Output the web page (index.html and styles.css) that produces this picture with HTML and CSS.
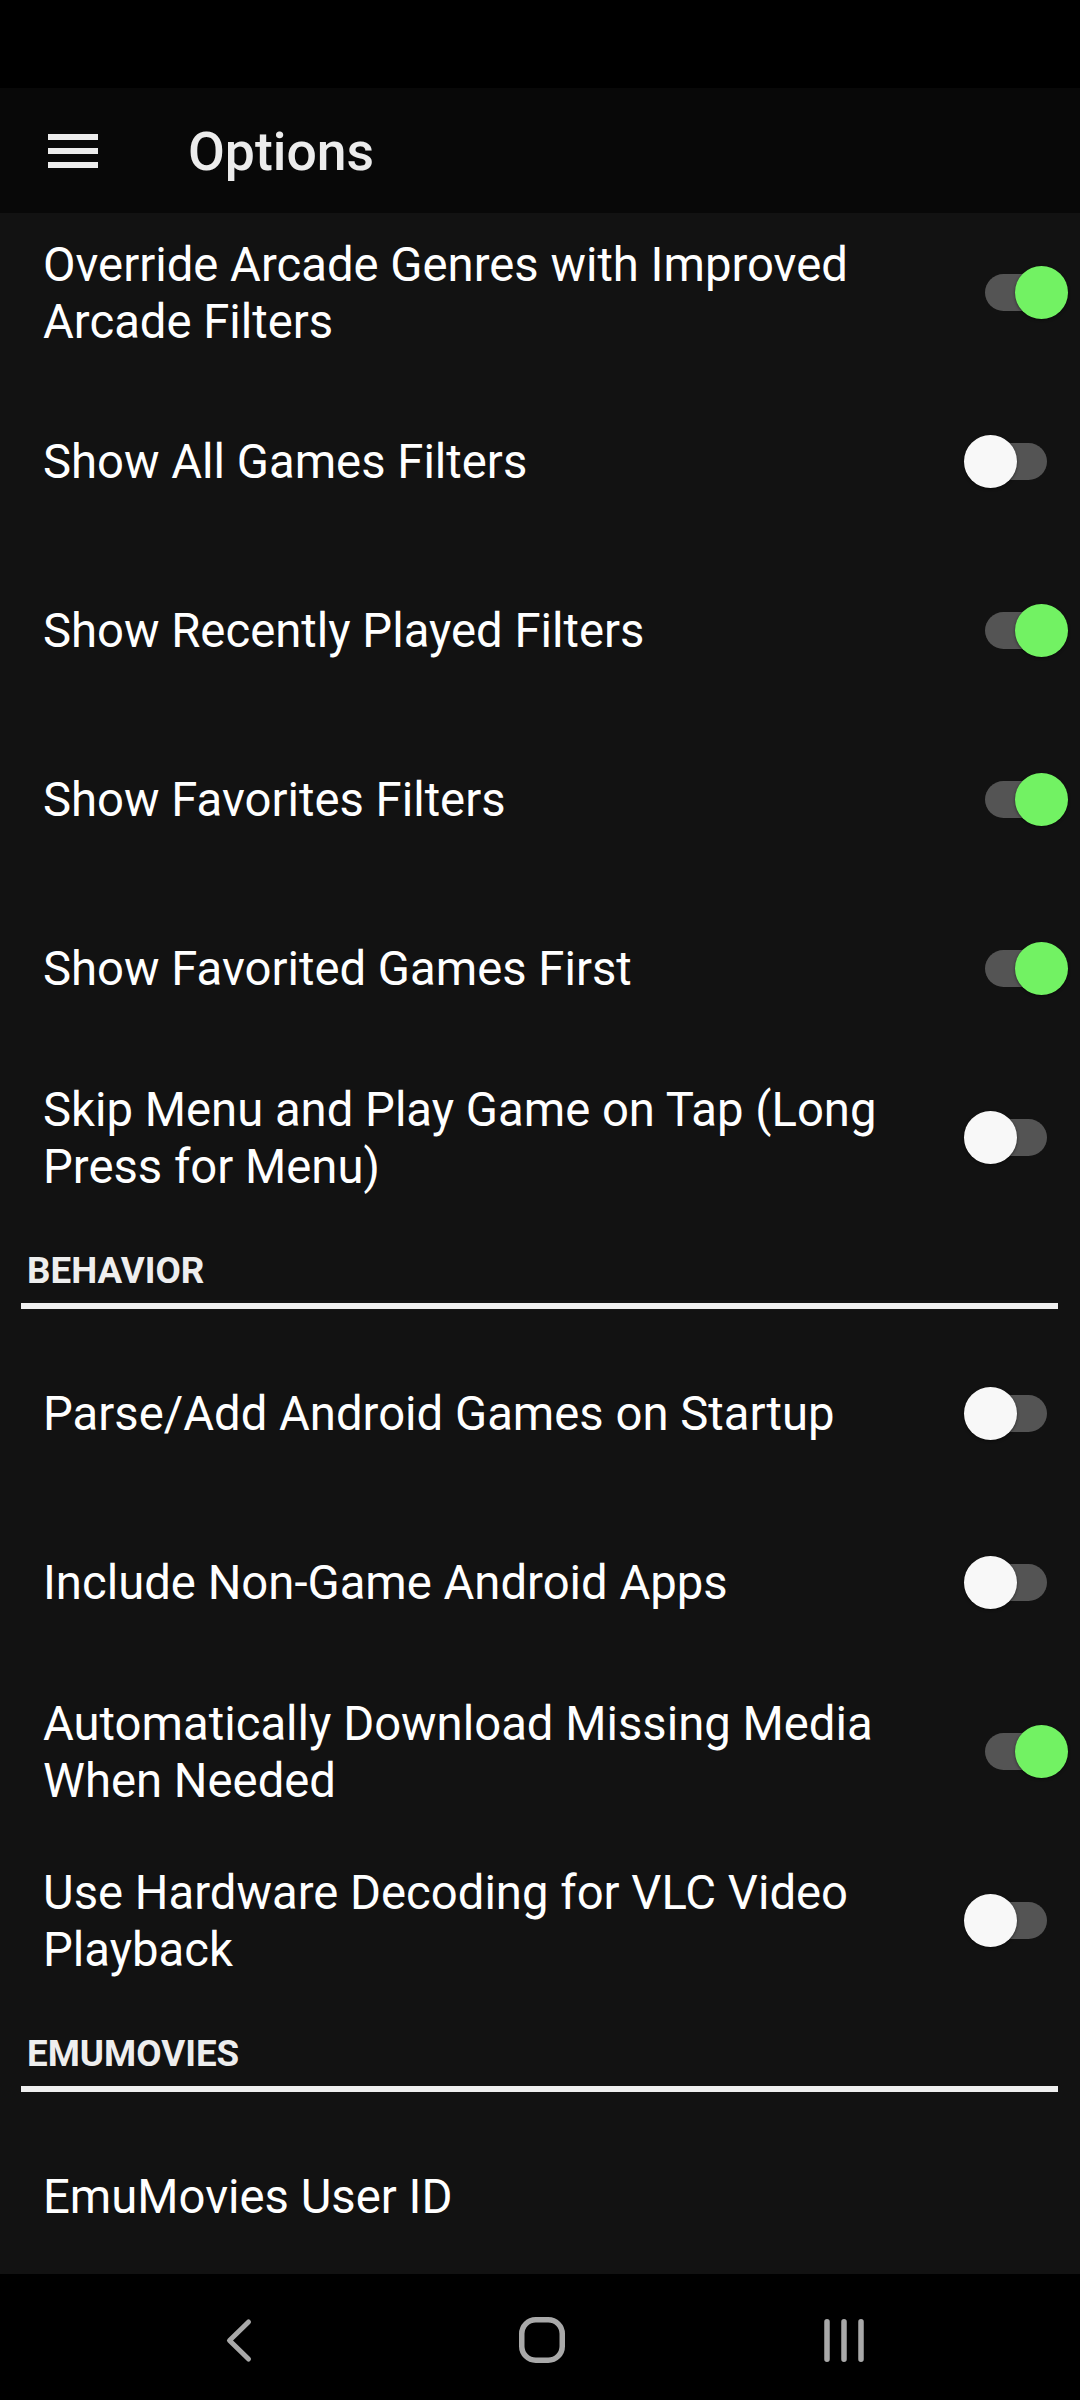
FILE: index.html
```html
<!DOCTYPE html>
<html>
<head>
<meta charset="utf-8">
<link rel="stylesheet" href="styles.css">
</head>
<body>
<div class="screen">
  <div class="status"></div>
  <div class="toolbar">
    <svg class="menu" width="50" height="34" viewBox="0 0 50 34">
      <rect x="0" y="0" width="50" height="6" fill="#ececec"/>
      <rect x="0" y="14" width="50" height="6" fill="#ececec"/>
      <rect x="0" y="28" width="50" height="6" fill="#ececec"/>
    </svg>
    <div class="title">Options</div>
  </div>
  <div class="content">
    <div class="list">
      <div class="row"><div class="label">Override Arcade Genres with Improved Arcade Filters</div><div class="switch on"><div class="track"></div><div class="thumb"></div></div></div>
      <div class="row"><div class="label">Show All Games Filters</div><div class="switch"><div class="track"></div><div class="thumb"></div></div></div>
      <div class="row"><div class="label">Show Recently Played Filters</div><div class="switch on"><div class="track"></div><div class="thumb"></div></div></div>
      <div class="row"><div class="label">Show Favorites Filters</div><div class="switch on"><div class="track"></div><div class="thumb"></div></div></div>
      <div class="row"><div class="label">Show Favorited Games First</div><div class="switch on"><div class="track"></div><div class="thumb"></div></div></div>
      <div class="row"><div class="label">Skip Menu and Play Game on Tap (Long Press for Menu)</div><div class="switch"><div class="track"></div><div class="thumb"></div></div></div>
      <div class="section">
        <div class="section-title">BEHAVIOR</div>
        <div class="divider"></div>
      </div>
      <div class="row"><div class="label">Parse/Add Android Games on Startup</div><div class="switch"><div class="track"></div><div class="thumb"></div></div></div>
      <div class="row"><div class="label">Include Non-Game Android Apps</div><div class="switch"><div class="track"></div><div class="thumb"></div></div></div>
      <div class="row"><div class="label">Automatically Download Missing Media When Needed</div><div class="switch on"><div class="track"></div><div class="thumb"></div></div></div>
      <div class="row"><div class="label">Use Hardware Decoding for VLC Video Playback</div><div class="switch"><div class="track"></div><div class="thumb"></div></div></div>
      <div class="section">
        <div class="section-title">EMUMOVIES</div>
        <div class="divider"></div>
      </div>
      <div class="row"><div class="label">EmuMovies User ID</div></div>
    </div>
  </div>
  <div class="navbar">
    <svg width="60" height="60" viewBox="0 0 60 60">
      <path d="M39.5 12 L20.5 30.5 L39.5 49" fill="none" stroke="#a9a9a9" stroke-width="5" stroke-linecap="round" stroke-linejoin="round"/>
    </svg>
    <svg width="60" height="60" viewBox="0 0 60 60">
      <rect x="9.75" y="9.75" width="40.5" height="40.5" rx="14" fill="none" stroke="#a9a9a9" stroke-width="5.5"/>
    </svg>
    <svg width="60" height="60" viewBox="0 0 60 60">
      <path d="M13 11.75 V49.25 M30 11.75 V49.25 M47 11.75 V49.25" fill="none" stroke="#a9a9a9" stroke-width="5.5" stroke-linecap="round"/>
    </svg>
  </div>
</div>
</body>
</html>
```
FILE: styles.css
```css
html, body {
  margin: 0;
  padding: 0;
  background: #000;
}
.screen {
  width: 1080px;
  height: 2400px;
  display: flex;
  flex-direction: column;
  font-family: Roboto, "Noto Sans", sans-serif;
  overflow: hidden;
}
.status {
  height: 88px;
  background: #000;
  flex: none;
}
.toolbar {
  height: 125px;
  flex: none;
  background: #080808;
  display: flex;
  align-items: center;
  position: relative;
  z-index: 2;
}
.menu {
  margin-left: 48px;
  display: block;
}
.title {
  margin-left: 90px;
  font-size: 53.5px;
  font-weight: 500;
  color: #ececec;
  line-height: 62px;
  padding-top: 2px;
}
.content {
  flex: 1;
  background: #121212;
  overflow: hidden;
}
.list {
  margin-top: -5.5px;
}
.row {
  height: 169px;
  display: flex;
  align-items: center;
  padding: 0 13px 0 43px;
}
.label {
  flex: 1;
  font-size: 47.25px;
  line-height: 56.5px;
  color: #fff;
  margin-right: 20px;
  padding-top: 3px;
}
.switch {
  position: relative;
  width: 103px;
  height: 53px;
  flex: none;
}
.track {
  position: absolute;
  left: 21px;
  top: 8px;
  width: 62px;
  height: 37px;
  border-radius: 18.5px;
  background: #545454;
}
.thumb {
  position: absolute;
  left: 0;
  top: 0;
  width: 53px;
  height: 53px;
  border-radius: 50%;
  background: #f8f8f8;
  box-shadow: 0 1px 3px rgba(0, 0, 0, 0.5);
}
.switch.on .thumb {
  left: 51px;
  background: #72f263;
}
.section {
  height: 107px;
  padding: 27.5px 22px 0 21px;
  box-sizing: border-box;
}
.section-title {
  font-size: 36.75px;
  font-weight: 700;
  line-height: 43px;
  color: #eeeeee;
  margin-left: 6px;
}
.divider {
  margin-top: 11px;
  height: 6px;
  background: #efefef;
}
.navbar {
  height: 126px;
  flex: none;
  background: #000;
  display: flex;
  justify-content: center;
  align-items: flex-start;
  padding-top: 36px;
  box-sizing: border-box;
  gap: 242.5px;
  padding-left: 3px;
}
.navbar svg {
  display: block;
}
```
